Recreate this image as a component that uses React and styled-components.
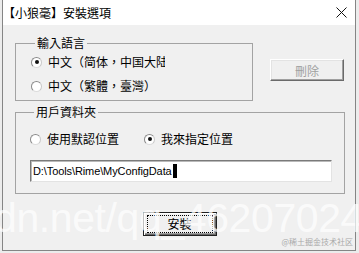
import React from 'react';
import styled, { createGlobalStyle } from 'styled-components';

const GlobalStyle = createGlobalStyle`
	html, body {
		margin: 0;
		padding: 0;
		background: #ececec;
	}
	body {
		font-family: "Noto Sans CJK TC", "Noto Sans CJK SC", sans-serif;
		font-size: 12px;
		color: #000;
	}
`;

const Screen = styled.div`
	position: relative;
	width: 359px;
	height: 253px;
	overflow: hidden;
	padding-left: 2px;
	box-sizing: border-box;
`;

const Window = styled.div`
	width: 354px;
	height: 251px;
	box-sizing: border-box;
	border: 1px solid #858585;
	border-top: none;
	background: #f0f0f0;
	display: flex;
	flex-direction: column;
`;

const TitleBar = styled.div`
	height: 25px;
	flex: none;
	background: #fff;
	display: flex;
	align-items: center;
	justify-content: space-between;
	padding: 0 8px 0 0;
`;

const Title = styled.span`
	font-size: 12px;
	line-height: 16px;
	white-space: nowrap;
`;

const Body = styled.div`
	flex: 1;
	display: flex;
	flex-direction: column;
	padding: 10px 9px 0 12px;
`;

const TopRow = styled.div`
	display: flex;
	align-items: flex-start;
	gap: 17px;
`;

const Group = styled.fieldset`
	margin: 0;
	padding: ${(p) => p.$pad};
	min-width: 0;
	width: ${(p) => p.$width}px;
	box-sizing: border-box;
	border: 1px solid #a3a3a3;
	display: flex;
	flex-direction: column;
	align-items: flex-start;
	gap: ${(p) => p.$gap}px;
	margin-top: ${(p) => p.$top || 0}px;
`;

const Legend = styled.legend`
	margin-left: 4px;
	padding: 0 2px;
	font-size: 12px;
	line-height: 16px;
`;

const RadioRow = styled.div`
	display: flex;
	align-items: center;
	gap: 25px;
	height: 22px;
`;

const RadioLabel = styled.label`
	display: flex;
	align-items: center;
	gap: 6px;
	height: 22px;
	line-height: 16px;
	white-space: nowrap;
`;

const RadioDot = styled.span`
	width: 11px;
	height: 11px;
	box-sizing: border-box;
	border-radius: 50%;
	border: 1px solid;
	border-color: #8a8a8a #c8c8c8 #dcdcdc #8a8a8a;
	background: #fff;
	display: flex;
	align-items: center;
	justify-content: center;
	flex: none;

	&::after {
		content: '';
		width: 4px;
		height: 4px;
		border-radius: 50%;
		background: ${(p) => (p.$checked ? '#111' : 'transparent')};
	}
`;

const RadioText = styled.span`
	display: block;
	overflow: hidden;
	max-width: ${(p) => (p.$clip ? `${p.$clip}px` : 'none')};
`;

const Radio = ({ checked, clip, children }) => (
	<RadioLabel>
		<RadioDot $checked={checked} />
		<RadioText $clip={clip}>{children}</RadioText>
	</RadioLabel>
);

const Button = styled.button`
	width: 74px;
	height: ${(p) => p.$h}px;
	margin: ${(p) => p.$margin};
	padding: 0;
	box-sizing: border-box;
	background: #f0f0f0;
	font-family: "Noto Sans CJK TC", sans-serif;
	font-size: 12px;
	color: ${(p) => (p.disabled ? '#a0a0a0' : '#000')};
	border: 1px solid;
	border-color: ${(p) => (p.$default ? '#202020' : '#fff #6a6a6a #6a6a6a #fff')};
	box-shadow: ${(p) =>
		p.$default
			? 'inset 1px 1px 0 #fff, inset -1px -1px 0 #6a6a6a, inset -2px -2px 0 #a0a0a0'
			: 'inset -1px -1px 0 #a0a0a0, inset 1px 1px 0 #e3e3e3'};
	display: flex;
	align-items: center;
	justify-content: center;
	flex: none;
`;

const FocusRect = styled.span`
	display: flex;
	align-items: center;
	justify-content: center;
	width: 64px;
	height: 16px;
	border: 1px dotted #000;
	line-height: 16px;
`;

const PathInput = styled.div`
	width: 302px;
	height: 22px;
	box-sizing: border-box;
	margin-top: 10px;
	background: #fff;
	border: 1px solid;
	border-color: #7a7a7a #e3e3e3 #e3e3e3 #7a7a7a;
	box-shadow: inset 1px 1px 0 #b9b9b9;
	display: flex;
	align-items: center;
	padding-left: 2px;
	font-family: "Liberation Sans", Arial, sans-serif;
	font-size: 11px;
	letter-spacing: -0.1px;
`;

const Caret = styled.span`
	display: inline-block;
	width: 4px;
	height: 14px;
	background: #000;
	margin-left: 1px;
`;

const Footer = styled.div`
	display: flex;
	justify-content: center;
	padding-right: 2px;
`;

const Watermark = styled.div`
	position: absolute;
	left: -6px;
	top: 196px;
	font-family: "Liberation Sans", Arial, sans-serif;
	font-size: 41px;
	line-height: 44px;
	color: rgba(255, 255, 255, 0.72);
	white-space: nowrap;
	pointer-events: none;
	letter-spacing: -0.4px;
`;

const Credit = styled.div`
	position: absolute;
	right: 6px;
	top: 237px;
	font-size: 8px;
	line-height: 10px;
	color: #a9a9a9;
	white-space: nowrap;
	pointer-events: none;
`;

const CloseIcon = () => (
	<svg width="11" height="11" viewBox="0 0 11 11">
		<path d="M0.5 0.5 L10.5 10.5 M10.5 0.5 L0.5 10.5" stroke="#111" strokeWidth="1" />
	</svg>
);

export default function App() {
	return (
		<>
			<GlobalStyle />
			<Screen>
				<Window>
					<TitleBar>
						<Title>【小狼毫】安裝選項</Title>
						<CloseIcon />
					</TitleBar>
					<Body>
						<TopRow>
							<Group $width={238} $pad="0 0 3px 15px" $gap={2}>
								<Legend>輸入語言</Legend>
								<Radio checked clip={117}>
									中文（简体，中国大陆）
								</Radio>
								<Radio>中文（繁體，臺灣）</Radio>
							</Group>
							<Button disabled $h={22} $margin="24px 0 0 0">
								刪除
							</Button>
						</TopRow>
						<Group $width={330} $pad="8px 0 11px 14px" $gap={0} $top={3}>
							<Legend>用戶資料夾</Legend>
							<RadioRow>
								<Radio>使用默認位置</Radio>
								<Radio checked>我來指定位置</Radio>
							</RadioRow>
							<PathInput>
								D:\Tools\Rime\MyConfigData
								<Caret />
							</PathInput>
						</Group>
						<Footer>
							<Button $default $h={24} $margin="18px 0 0 0">
								<FocusRect>安裝</FocusRect>
							</Button>
						</Footer>
					</Body>
				</Window>
				<Watermark>dn.net/qq_46207024</Watermark>
				<Credit>@稀土掘金技术社区</Credit>
			</Screen>
		</>
	);
}
